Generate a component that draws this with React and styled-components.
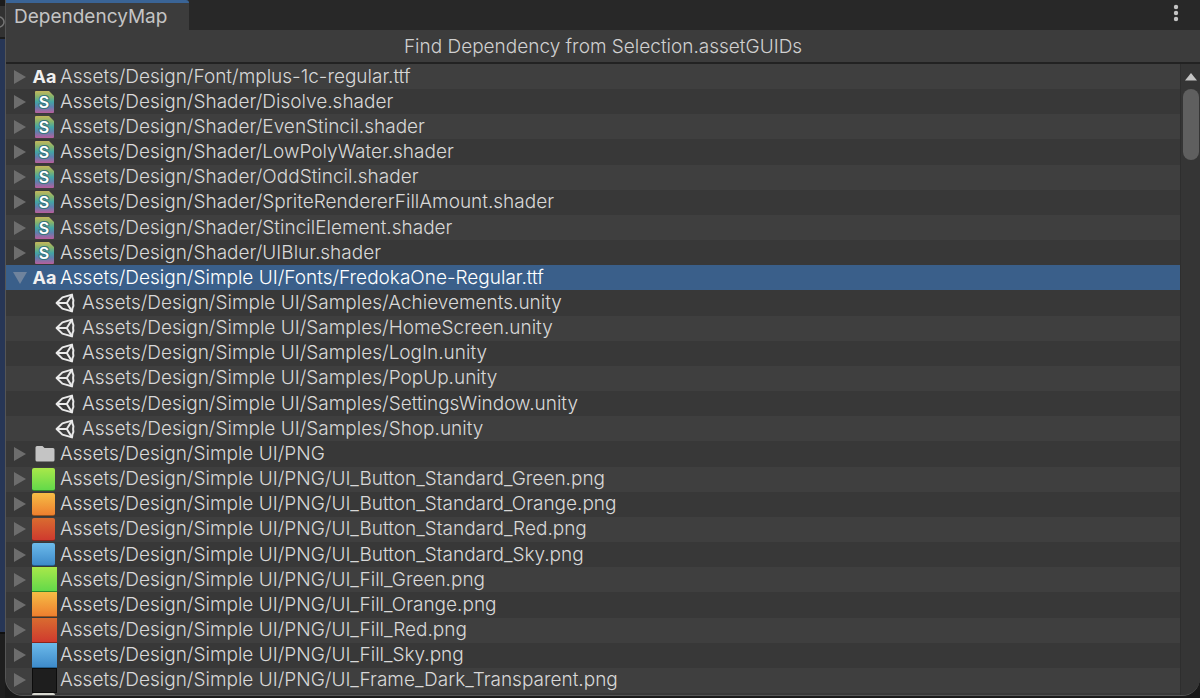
import React from "react";
import styled, { createGlobalStyle } from "styled-components";

const Global = createGlobalStyle`
  *, *::before, *::after { box-sizing: border-box; }
  html, body, #root { height: 100%; margin: 0; }
  body {
    background: #191919;
    color: #c4c4c4;
    font-family: Inter, "Liberation Sans", sans-serif;
    font-size: 19px;
    overflow: hidden;
  }
  button { font: inherit; color: inherit; border: 0; padding: 0; background: none; }
`;

const Screen = styled.div`
  height: 100%;
  display: grid;
  grid-template-columns: 5px minmax(0, 1fr);
`;

const Neighbour = styled.div`
  display: grid;
  grid-template-rows: 39px minmax(0, 1fr) 66px;
  overflow: hidden;
`;

const NeighbourTab = styled.div`
  background: #323232;
  border-bottom: 2px solid #1c1c1c;
  border-top: 6px solid #1c1c1c;
`;

const NeighbourRing = styled.svg`
  display: block;
  width: 5px;
  height: 31px;
`;

const NeighbourView = styled.div`
  background: #273656;
`;

const NeighbourFoot = styled.div`
  background: #1e1e1e;
  border-top: 2px solid #101010;
`;

const Window = styled.main`
  display: flex;
  flex-direction: column;
  min-height: 0;
  margin-bottom: 2px;
  background: #383838;
  border: solid #555;
  border-width: 0 0 1px 1px;
  border-radius: 0 0 18px 18px;
  overflow: hidden;
`;

const TabBar = styled.header`
  height: 30px;
  flex: none;
  display: flex;
  justify-content: space-between;
  background: #282828;
`;

const Tab = styled.button`
  width: 183px;
  padding: 0 0 0 8px;
  text-align: left;
  background: #3c3c3c;
  border-top: 3px solid #3a6496;
  border-top-right-radius: 3px;
`;

const MenuButton = styled.button`
  width: 24px;
  margin-right: 12px;
  display: grid;
  place-items: start center;
  padding-top: 4px;
`;

const FindButton = styled.button`
  height: 32px;
  flex: none;
  width: 100%;
  background: #3c3c3c;
  text-align: center;
  font-weight: 300;
  color: #d0d0d0;
`;

const Body = styled.div`
  flex: 1;
  min-height: 0;
  display: grid;
  grid-template-columns: minmax(0, 1fr) 20px;
  border-top: 2px solid #222;
`;

const Tree = styled.ul`
  list-style: none;
  margin: 0;
  padding: 0;
  min-height: 0;
  display: grid;
  grid-template-rows: repeat(25, minmax(0, 1fr)) 2px;
  overflow: hidden;
`;

const Row = styled.li`
  min-height: 0;
  overflow: hidden;
  display: grid;
  grid-template-columns: ${(p) => (p.$child ? "0 25px" : "18px 25px")} minmax(0, 1fr);
  column-gap: ${(p) => (p.$child ? "5px" : "3px")};
  align-items: center;
  padding-left: ${(p) => (p.$child ? "41px" : "5px")};
  white-space: nowrap;
  color: ${(p) => (p.$selected ? "#ffffff" : "#d8d8d8")};
  background: #383838;
  &:nth-child(odd) { background: #3f3f3f; }
  &&& { ${(p) => (p.$selected ? "background: #3a5f8a;" : "")} }
`;

const Fold = styled.button`
  display: grid;
  place-items: center;
  height: 100%;
`;

const IconCell = styled.span`
  display: grid;
  place-items: center;
`;

const Label = styled.span`
  line-height: 24px;
  font-weight: 300;
`;

const FontGlyph = styled.span`
  font-size: 18px;
  line-height: 24px;
  font-weight: 700;
  color: #f0f0f0;
`;

const fills = {
  green: ["#a9e84a", "#63d94a", "#2f8d2b"],
  orange: ["#f6bd45", "#ee7f2f", "#96521d"],
  red: ["#d96c30", "#cf3a2e", "#8c241c"],
  sky: ["#6cbaea", "#3e8bca", "#24608f"],
  dark: ["#1e1e1e", "#1e1e1e", "#0c0c0c"],
  pale: ["#d8d8d0", "#d8d8d0", "#d8d8d0"],
};

const Swatch = styled.span`
  justify-self: start;
  width: ${(p) => (p.$wide ? "25px" : "23px")};
  height: ${(p) => (p.$wide ? "25px" : "23px")};
  border-radius: ${(p) => (p.$wide ? "0" : "2px")};
  background: linear-gradient(${(p) => fills[p.$tone][0]}, ${(p) => fills[p.$tone][1]});
  border: 0 solid ${(p) => fills[p.$tone][2]};
  border-width: ${(p) => (p.$tone === "dark" ? "1px" : "0 0 1px")};
`;

const ScrollTrack = styled.div`
  background: #353535;
  border-left: 1px solid #2e2e2e;
  display: flex;
  flex-direction: column;
  align-items: center;
`;

const ScrollUp = styled.button`
  height: 25px;
  width: 100%;
  display: grid;
  place-items: center;
`;

const ScrollThumb = styled.div`
  width: 16px;
  height: 71px;
  border-radius: 8px;
  background: #5f5f5f;
`;

function ShaderIcon() {
  return (
    <svg width="19" height="22" viewBox="0 0 19 22" aria-hidden="true">
      <defs>
        <linearGradient id="shader" x1="0" y1="0" x2="0" y2="1">
          <stop offset="0" stopColor="#c5b75c" />
          <stop offset="0.25" stopColor="#86b36c" />
          <stop offset="0.5" stopColor="#42a5a6" />
          <stop offset="0.72" stopColor="#607fae" />
          <stop offset="1" stopColor="#b95e9c" />
        </linearGradient>
      </defs>
      <path d="M1 0H14L19 5V21Q19 22 18 22H1Q0 22 0 21V1Q0 0 1 0Z" fill="url(#shader)" />
      <text x="9" y="17" textAnchor="middle" fontSize="16" fontWeight="600" fill="#fff" stroke="#37747c" strokeWidth="2" paintOrder="stroke">S</text>
    </svg>
  );
}

function UnityIcon() {
  return (
    <svg width="20" height="20" viewBox="0 0 20 20" fill="none" stroke="#eaeaea" strokeWidth="2" strokeLinejoin="round" aria-hidden="true">
      <path d="M1.6 10L7.4 4.4L17 1.6Q17.2 5.4 18.4 7Q17.8 10 18.4 13Q17.2 14.6 17 18.4L7.4 15.6Z" />
      <path d="M1.6 10H11.8M11.8 10L17 1.6M11.8 10L17 18.4" />
    </svg>
  );
}

function FolderIcon() {
  return (
    <svg width="20" height="16" viewBox="0 0 20 16" aria-hidden="true">
      <path d="M2 0H7.5L9.5 2H18Q19.5 2 19.5 3.5V14Q19.5 15.5 18 15.5H2Q.5 15.5 .5 14V1.5Q.5 0 2 0Z" fill="#c4c4c4" />
    </svg>
  );
}

function Triangle({ open }) {
  return (
    <svg width="14" height="14" viewBox="0 0 14 14" aria-hidden="true">
      <path d={open ? "M0 1H14L7 13Z" : "M1 0V14L13 7Z"} fill={open ? "#6f839d" : "#6d6d6d"} />
    </svg>
  );
}

const rows = [
  ["font", "Assets/Design/Font/mplus-1c-regular.ttf"],
  ["shader", "Assets/Design/Shader/Disolve.shader"],
  ["shader", "Assets/Design/Shader/EvenStincil.shader"],
  ["shader", "Assets/Design/Shader/LowPolyWater.shader"],
  ["shader", "Assets/Design/Shader/OddStincil.shader"],
  ["shader", "Assets/Design/Shader/SpriteRendererFillAmount.shader"],
  ["shader", "Assets/Design/Shader/StincilElement.shader"],
  ["shader", "Assets/Design/Shader/UIBlur.shader"],
  ["font", "Assets/Design/Simple UI/Fonts/FredokaOne-Regular.ttf", "selected"],
  ["unity", "Assets/Design/Simple UI/Samples/Achievements.unity"],
  ["unity", "Assets/Design/Simple UI/Samples/HomeScreen.unity"],
  ["unity", "Assets/Design/Simple UI/Samples/LogIn.unity"],
  ["unity", "Assets/Design/Simple UI/Samples/PopUp.unity"],
  ["unity", "Assets/Design/Simple UI/Samples/SettingsWindow.unity"],
  ["unity", "Assets/Design/Simple UI/Samples/Shop.unity"],
  ["folder", "Assets/Design/Simple UI/PNG"],
  ["green", "Assets/Design/Simple UI/PNG/UI_Button_Standard_Green.png"],
  ["orange", "Assets/Design/Simple UI/PNG/UI_Button_Standard_Orange.png"],
  ["red", "Assets/Design/Simple UI/PNG/UI_Button_Standard_Red.png"],
  ["sky", "Assets/Design/Simple UI/PNG/UI_Button_Standard_Sky.png"],
  ["green", "Assets/Design/Simple UI/PNG/UI_Fill_Green.png", "wide"],
  ["orange", "Assets/Design/Simple UI/PNG/UI_Fill_Orange.png", "wide"],
  ["red", "Assets/Design/Simple UI/PNG/UI_Fill_Red.png", "wide"],
  ["sky", "Assets/Design/Simple UI/PNG/UI_Fill_Sky.png", "wide"],
  ["dark", "Assets/Design/Simple UI/PNG/UI_Frame_Dark_Transparent.png", "wide"],
];

function AssetIcon({ kind, wide }) {
  if (kind === "font") return <FontGlyph>Aa</FontGlyph>;
  if (kind === "shader") return <ShaderIcon />;
  if (kind === "unity") return <UnityIcon />;
  if (kind === "folder") return <FolderIcon />;
  return <Swatch $tone={kind} $wide={wide} />;
}

export default function App() {
  return (
    <>
      <Global />
      <Screen>
        <Neighbour>
          <NeighbourTab>
            <NeighbourRing viewBox="0 0 5 31" aria-hidden="true">
              <circle cx="-1" cy="16" r="5" fill="none" stroke="#777" strokeWidth="1.5" />
            </NeighbourRing>
          </NeighbourTab>
          <NeighbourView />
          <NeighbourFoot />
        </Neighbour>
        <Window>
          <TabBar>
            <Tab>DependencyMap</Tab>
            <MenuButton aria-label="Window menu">
              <svg width="6" height="18" viewBox="0 0 6 18" fill="#c4c4c4" aria-hidden="true">
                <circle cx="3" cy="3" r="2.2" />
                <circle cx="3" cy="9" r="2.2" />
                <circle cx="3" cy="15" r="2.2" />
              </svg>
            </MenuButton>
          </TabBar>
          <FindButton>Find Dependency from Selection.assetGUIDs</FindButton>
          <Body>
            <Tree>
              {rows.map(([kind, path, mark]) => (
                <Row key={path} $child={kind === "unity"} $selected={mark === "selected"}>
                  {kind === "unity" ? (
                    <span />
                  ) : (
                    <Fold aria-label={"Toggle " + path}>
                      <Triangle open={mark === "selected"} />
                    </Fold>
                  )}
                  <IconCell>
                    <AssetIcon kind={kind} wide={mark === "wide"} />
                  </IconCell>
                  <Label>{path}</Label>
                </Row>
              ))}
              <Row>
                <span />
                <Swatch $tone="pale" />
              </Row>
            </Tree>
            <ScrollTrack>
              <ScrollUp aria-label="Scroll up">
                <svg width="12" height="8" viewBox="0 0 12 8" aria-hidden="true">
                  <path d="M6 0L12 7.5H0Z" fill="#c4c4c4" />
                </svg>
              </ScrollUp>
              <ScrollThumb />
            </ScrollTrack>
          </Body>
        </Window>
      </Screen>
    </>
  );
}
